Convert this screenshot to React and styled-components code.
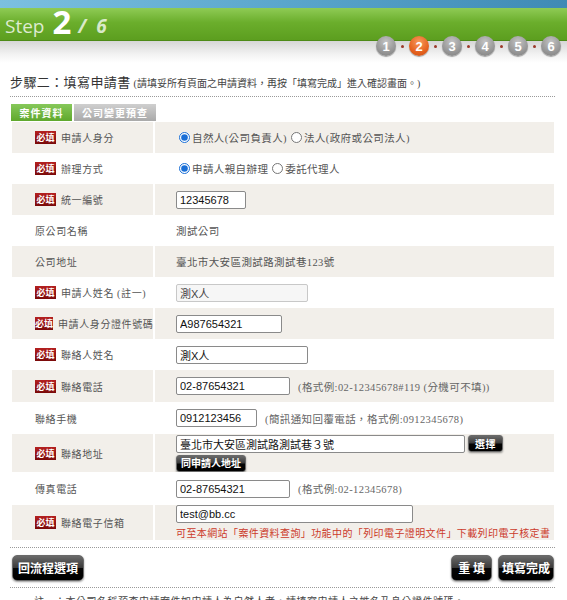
import styled, { createGlobalStyle } from "styled-components";

const GlobalStyle = createGlobalStyle`
  body {
    margin: 0;
    background: #fff;
    font-family: "Liberation Serif", "Noto Sans CJK TC", serif;
    color: #555;
  }
`;

const Page = styled.div`
  width: 567px;
  height: 600px;
  overflow: hidden;
`;

const TopBand = styled.div`
  height: 8px;
  background: linear-gradient(90deg, #7cc0e0 0%, #5aa6cc 50%, #3f8ab5 100%);
`;

const GreenBand = styled.div`
  height: 33px;
  display: flex;
  align-items: flex-end;
  padding: 0 0 3px 5px;
  box-sizing: border-box;
  background: linear-gradient(180deg, #8fcb55 0%, #6bae2c 45%, #5c9e1f 100%);
  border-bottom: 1px solid #4d8a17;
  font-family: "Open Sans", "Liberation Sans", sans-serif;
  color: #fff;
`;

const StepWord = styled.span`
  font-size: 19px;
  line-height: 22px;
  color: rgba(255, 255, 255, 0.78);
  margin-right: 8px;
`;

const StepNow = styled.span`
  font-size: 33px;
  font-weight: 700;
  line-height: 30px;
  margin-right: 7px;
`;

const StepTotal = styled.span`
  font-size: 19px;
  font-weight: 700;
  font-style: italic;
  line-height: 22px;
  color: rgba(255, 255, 255, 0.75);
  margin-right: ${(p) => p.gap || 0}px;
`;

const GreyBand = styled.div`
  height: 22px;
  background: linear-gradient(180deg, #d6d6d6 0%, #f2f2f2 60%, #fff 100%);
  display: flex;
  justify-content: flex-end;
  padding-right: 6px;
`;

const Steps = styled.div`
  display: flex;
  align-items: center;
  gap: 5px;
  margin-top: -5px;
  height: 20px;
`;

const Circle = styled.div`
  width: 20px;
  height: 20px;
  border-radius: 50%;
  display: flex;
  align-items: center;
  justify-content: center;
  font-family: "Liberation Sans", Arial, sans-serif;
  font-size: 13px;
  font-weight: 700;
  color: #fff;
  background: ${(p) =>
    p.active
      ? "radial-gradient(circle at 50% 30%, #f79a5c 0%, #e5621f 60%, #c94c12 100%)"
      : "radial-gradient(circle at 50% 30%, #c4c4c4 0%, #9a9a9a 55%, #7c7c7c 100%)"};
  box-shadow: 0 1px 1px rgba(0, 0, 0, 0.35);
`;

const Dot = styled.span`
  width: 3px;
  height: 3px;
  border-radius: 50%;
  background: #9b3a2a;
`;

const Content = styled.div`
  padding: 0 12px 0 10px;
`;

const TitleRow = styled.div`
  margin-top: 12px;
  display: flex;
  align-items: baseline;
  color: #333;
  padding-bottom: 5px;
  border-bottom: 1px dotted #9a9a9a;
`;

const Title = styled.span`
  font-size: 13px;
  letter-spacing: 0.4px;
  line-height: 16px;
  margin-right: 3px;
`;

const SubTitle = styled.span`
  font-size: 10px;
  line-height: 14px;
  color: #444;
`;

const Tabs = styled.div`
  display: flex;
  gap: 2px;
  margin: 7px 0 1px 1px;
`;

const Tab = styled.div`
  height: 17px;
  width: ${(p) => p.w}px;
  display: flex;
  align-items: center;
  justify-content: center;
  font-size: 10px;
  font-weight: 700;
  letter-spacing: 1px;
  color: #fff;
  background: ${(p) =>
    p.active
      ? "linear-gradient(180deg, #86c85a 0%, #5fa82c 100%)"
      : "linear-gradient(180deg, #cfcfcf 0%, #a9a9a9 100%)"};
`;

const Table = styled.div`
  margin: 0 1px 0 2px;
  display: flex;
  flex-direction: column;
`;

const Row = styled.div`
  display: grid;
  grid-template-columns: 141px 1fr;
  column-gap: 2px;
  height: ${(p) => p.h || 31}px;
  background: #fff;
`;

const LabelCell = styled.div`
  display: flex;
  align-items: center;
  padding-left: 23px;
  font-size: 10px;
  letter-spacing: 0.6px;
  white-space: nowrap;
  color: #555;
  background: ${(p) => (p.shade ? "#f2efea" : "#fff")};
`;

const ValueCell = styled.div`
  display: flex;
  flex-direction: ${(p) => (p.stack ? "column" : "row")};
  justify-content: ${(p) => (p.stack ? "center" : "flex-start")};
  align-items: ${(p) => (p.stack ? "flex-start" : "center")};
  gap: ${(p) => (p.stack ? 2 : 0)}px;
  padding-left: 21px;
  font-size: 10.5px;
  letter-spacing: 0.4px;
  white-space: nowrap;
  color: #555;
  background: ${(p) => (p.shade ? "#f2efea" : "#fff")};
`;

const Required = styled.span`
  display: inline-flex;
  align-items: center;
  justify-content: center;
  width: 21px;
  height: 13px;
  margin-right: 5px;
  font-size: 9px;
  font-weight: 700;
  letter-spacing: 0;
  color: #fff;
  background: linear-gradient(180deg, #b42020 0%, #7a0a0a 100%);
`;

const RadioLabel = styled.label`
  display: inline-flex;
  align-items: center;
  margin-right: 1px;
  letter-spacing: 0.4px;
  color: #555;
`;

const Radio = styled.input`
  width: 11px;
  height: 11px;
  margin: 0 2px 0 3px;
  accent-color: #1a6fd6;
`;

const TextInput = styled.input`
  box-sizing: border-box;
  width: ${(p) => p.w}px;
  height: 18px;
  padding: 0 3px;
  font-family: "Liberation Sans", Arial, "Noto Sans CJK TC", sans-serif;
  font-size: 11px;
  letter-spacing: 0;
  color: #111;
  border: 1px solid #8a8a8a;
  border-radius: 2px;
  background: #fff;
  &:disabled {
    background: #f6f6f6;
    border-color: #c8c8c8;
    color: #444;
  }
`;

const Hint = styled.span`
  margin-left: 8px;
  font-size: 10.5px;
  letter-spacing: 0.4px;
  color: #666;
`;

const Line = styled.div`
  display: flex;
  align-items: center;
  gap: 3px;
`;

const Notice = styled.div`
  font-size: 10px;
  letter-spacing: 0.4px;
  color: #cc3b2a;
  white-space: nowrap;
`;

const GlossButton = styled.button`
  height: ${(p) => p.h || 26}px;
  padding: 0 ${(p) => p.px || 6}px;
  border: 1px solid #6a6a6a;
  border-radius: ${(p) => (p.h && p.h < 20 ? 3 : 5)}px;
  background: linear-gradient(180deg, #6a6a6a 0%, #3a3a3a 48%, #050505 52%, #000 100%);
  color: #fff;
  font-family: "Noto Sans CJK TC", sans-serif;
  font-size: ${(p) => p.fs || 12}px;
  font-weight: 700;
  letter-spacing: ${(p) => p.ls ?? 0.5}px;
  line-height: 1;
  box-shadow: 0 1px 2px rgba(0, 0, 0, 0.4);
  cursor: pointer;
`;

const ActionBar = styled.div`
  margin-top: 9px;
  border-top: 1px dotted #9a9a9a;
  border-bottom: 1px dotted #9a9a9a;
  padding: 7px 1px 6px 2px;
  display: flex;
  justify-content: space-between;
`;

const ButtonGroup = styled.div`
  display: flex;
  gap: 6px;
`;

const Note = styled.div`
  margin-top: 5px;
  padding-left: 24px;
  font-size: 10px;
  letter-spacing: 0.5px;
  color: #444;
  white-space: nowrap;
`;

const Label = ({ req, children }) => (
  <>
    {req && <Required>必填</Required>}
    {children}
  </>
);

const App = () => {
  return (
    <Page>
      <GlobalStyle />
      <TopBand />
      <GreenBand>
        <StepWord>Step</StepWord>
        <StepNow>2</StepNow>
        <StepTotal gap={10}>/</StepTotal>
        <StepTotal>6</StepTotal>
      </GreenBand>
      <GreyBand>
        <Steps>
          {[1, 2, 3, 4, 5, 6].map((n) => [
            n > 1 && <Dot key={"d" + n} />,
            <Circle key={n} active={n === 2}>
              {n}
            </Circle>,
          ])}
        </Steps>
      </GreyBand>

      <Content>
        <TitleRow>
          <Title>步驟二：填寫申請書</Title>
          <SubTitle>(請填妥所有頁面之申請資料，再按「填寫完成」進入確認畫面。)</SubTitle>
        </TitleRow>

        <Tabs>
          <Tab active w={61}>案件資料</Tab>
          <Tab w={82}>公司變更預查</Tab>
        </Tabs>

        <Table>
          <Row>
            <LabelCell shade><Label req>申請人身分</Label></LabelCell>
            <ValueCell shade>
              <RadioLabel><Radio type="radio" name="who" defaultChecked />自然人(公司負責人)</RadioLabel>
              <RadioLabel><Radio type="radio" name="who" />法人(政府或公司法人)</RadioLabel>
            </ValueCell>
          </Row>
          <Row>
            <LabelCell><Label req>辦理方式</Label></LabelCell>
            <ValueCell>
              <RadioLabel><Radio type="radio" name="how" defaultChecked />申請人親自辦理</RadioLabel>
              <RadioLabel><Radio type="radio" name="how" />委託代理人</RadioLabel>
            </ValueCell>
          </Row>
          <Row>
            <LabelCell shade><Label req>統一編號</Label></LabelCell>
            <ValueCell shade><TextInput w={70} defaultValue="12345678" /></ValueCell>
          </Row>
          <Row>
            <LabelCell>原公司名稱</LabelCell>
            <ValueCell>測試公司</ValueCell>
          </Row>
          <Row>
            <LabelCell shade>公司地址</LabelCell>
            <ValueCell shade>臺北市大安區測試路測試巷123號</ValueCell>
          </Row>
          <Row>
            <LabelCell><Label req>申請人姓名 (註一)</Label></LabelCell>
            <ValueCell><TextInput w={132} disabled defaultValue="測X人" /></ValueCell>
          </Row>
          <Row>
            <LabelCell shade><Label req>申請人身分證件號碼</Label></LabelCell>
            <ValueCell shade><TextInput w={106} defaultValue="A987654321" /></ValueCell>
          </Row>
          <Row>
            <LabelCell><Label req>聯絡人姓名</Label></LabelCell>
            <ValueCell><TextInput w={132} defaultValue="測X人" /></ValueCell>
          </Row>
          <Row h={32}>
            <LabelCell shade><Label req>聯絡電話</Label></LabelCell>
            <ValueCell shade>
              <TextInput w={114} defaultValue="02-87654321" />
              <Hint>(格式例:02-12345678#119 (分機可不填))</Hint>
            </ValueCell>
          </Row>
          <Row h={32}>
            <LabelCell>聯絡手機</LabelCell>
            <ValueCell>
              <TextInput w={81} defaultValue="0912123456" />
              <Hint>(簡訊通知回覆電話，格式例:0912345678)</Hint>
            </ValueCell>
          </Row>
          <Row h={38}>
            <LabelCell shade><Label req>聯絡地址</Label></LabelCell>
            <ValueCell shade stack>
              <Line>
                <TextInput w={289} defaultValue="臺北市大安區測試路測試巷３號" />
                <GlossButton h={17} px={6} fs={10}>選擇</GlossButton>
              </Line>
              <GlossButton h={17} px={4} fs={10} ls={0}>同申請人地址</GlossButton>
            </ValueCell>
          </Row>
          <Row h={33}>
            <LabelCell>傳真電話</LabelCell>
            <ValueCell>
              <TextInput w={114} defaultValue="02-87654321" />
              <Hint>(格式例:02-12345678)</Hint>
            </ValueCell>
          </Row>
          <Row h={33}>
            <LabelCell shade><Label req>聯絡電子信箱</Label></LabelCell>
            <ValueCell shade stack>
              <TextInput w={237} defaultValue="test@bb.cc" />
              <Notice>可至本網站「案件資料查詢」功能中的「列印電子證明文件」下載列印電子核定書</Notice>
            </ValueCell>
          </Row>
        </Table>

        <ActionBar>
          <GlossButton px={5} fs={12} ls={0}>回流程選項</GlossButton>
          <ButtonGroup>
            <GlossButton px={6} fs={12} ls={0}>重 填</GlossButton>
            <GlossButton px={3} fs={12} ls={0}>填寫完成</GlossButton>
          </ButtonGroup>
        </ActionBar>

        <Note>註一：本公司名稱預查申請案件如申請人為自然人者，請填寫申請人之姓名及身分證件號碼。</Note>
      </Content>
    </Page>
  );
};

export default App;
